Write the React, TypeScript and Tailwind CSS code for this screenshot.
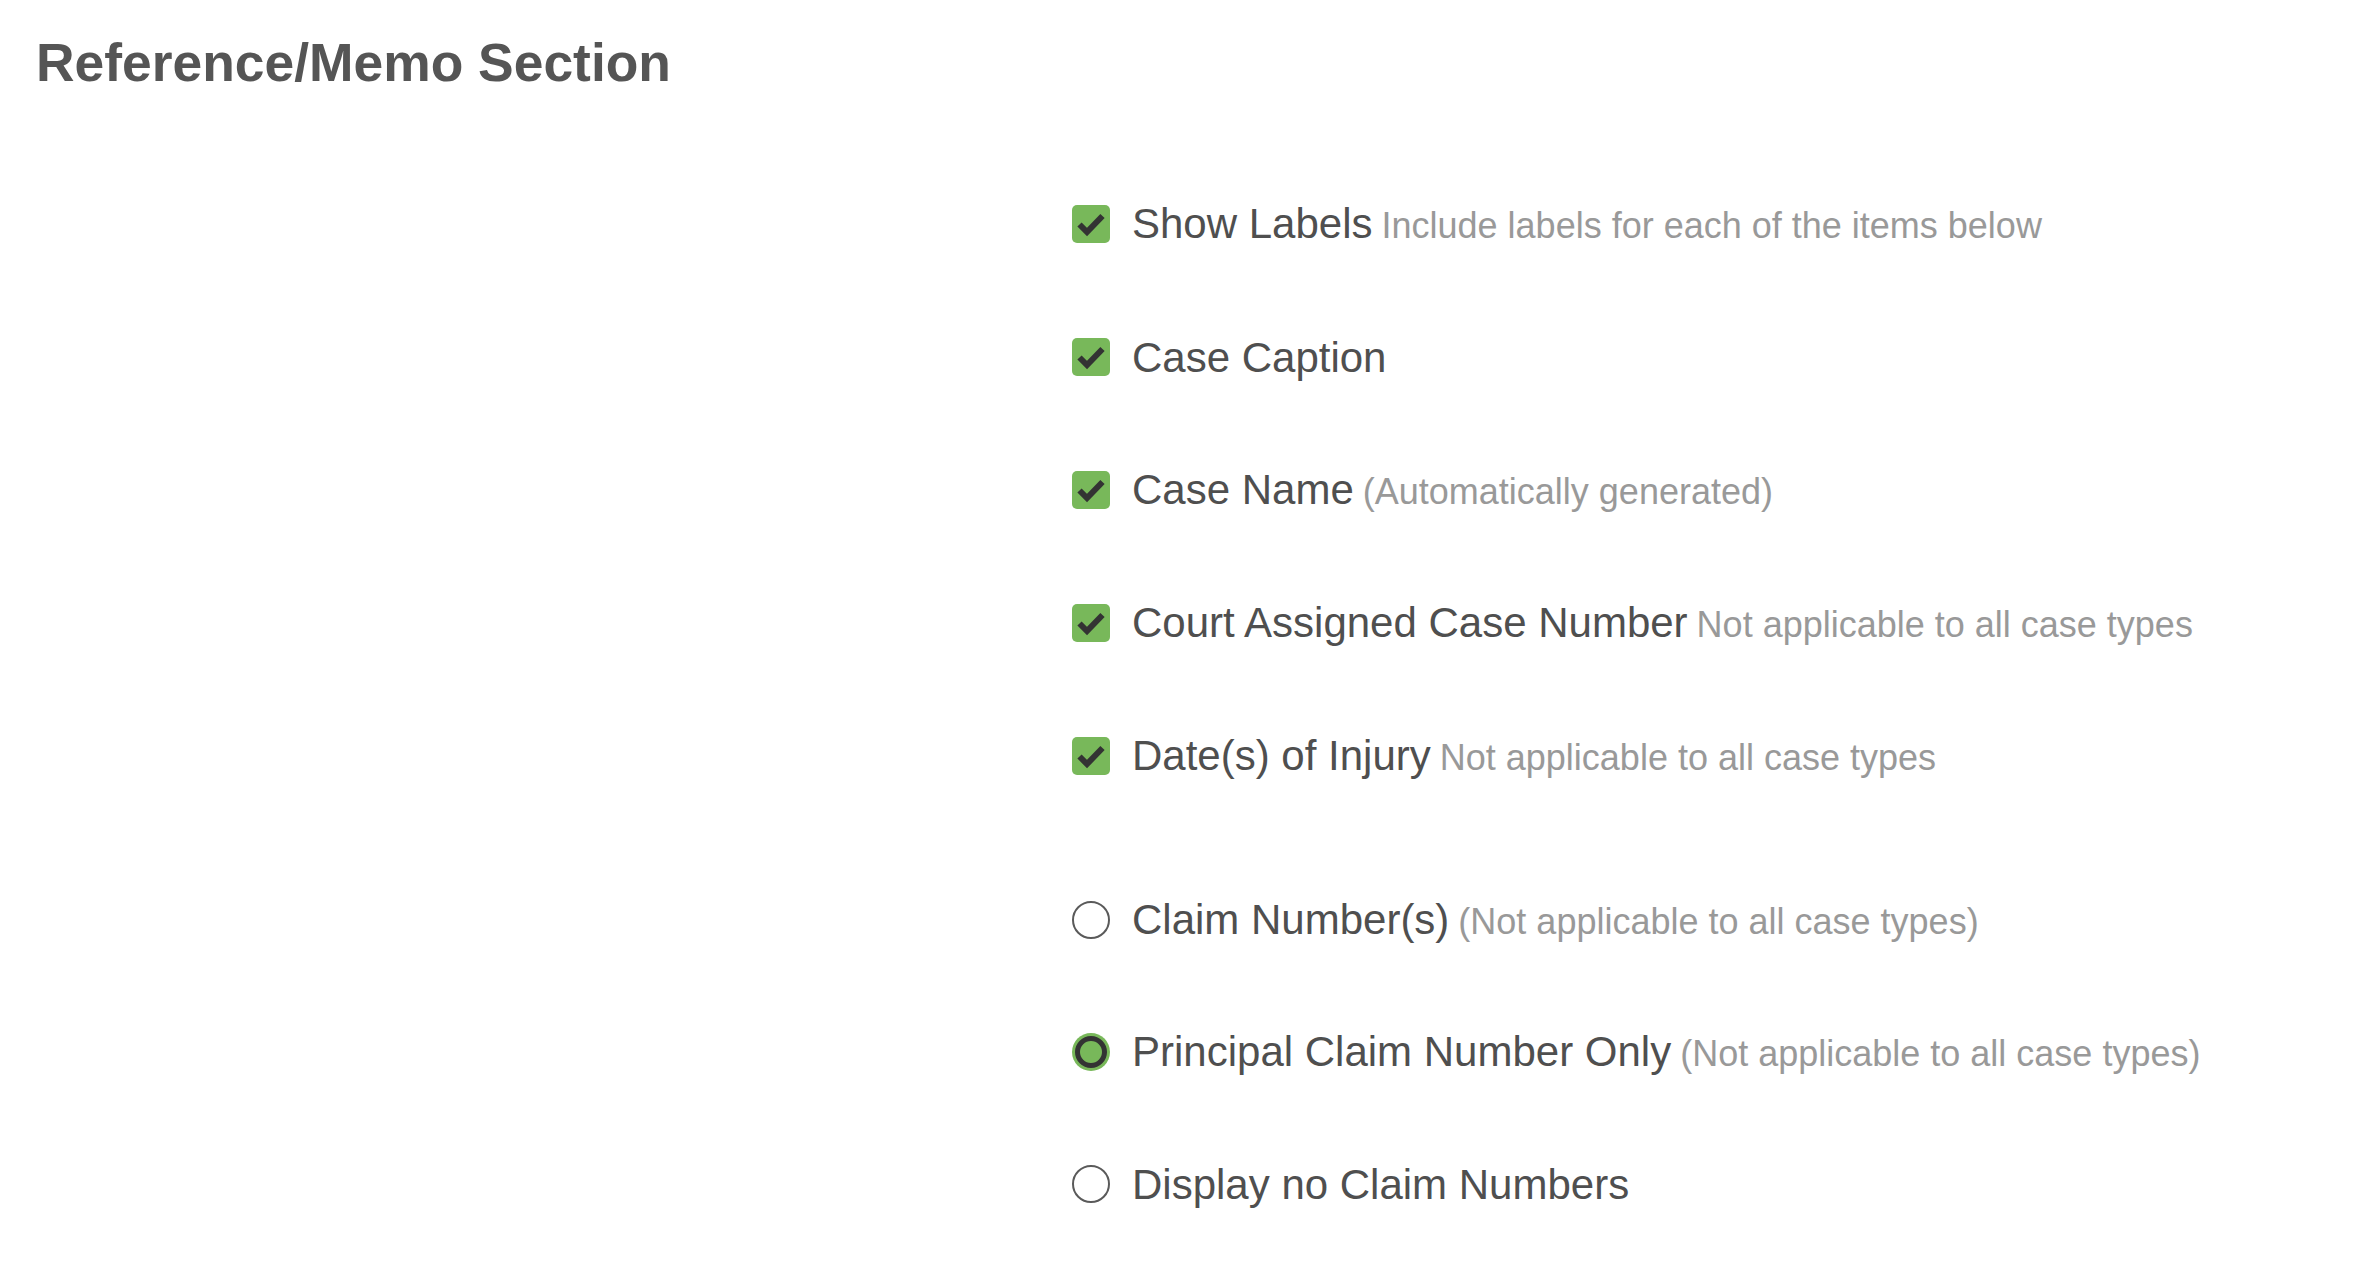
import React from "react";

type Option = {
  label: string;
  hint?: string;
};

const checkOptions: Option[] = [
  { label: "Show Labels", hint: "Include labels for each of the items below" },
  { label: "Case Caption" },
  { label: "Case Name", hint: "(Automatically generated)" },
  { label: "Court Assigned Case Number", hint: "Not applicable to all case types" },
  { label: "Date(s) of Injury", hint: "Not applicable to all case types" },
];

const claimOptions: Option[] = [
  { label: "Claim Number(s)", hint: "(Not applicable to all case types)" },
  { label: "Principal Claim Number Only", hint: "(Not applicable to all case types)" },
  { label: "Display no Claim Numbers" },
];

const CheckBox = () => (
  <span className="flex h-[38px] w-[38px] shrink-0 items-center justify-center rounded-[5px] bg-[#78b85a]">
    <svg width="30" height="30" viewBox="0 0 30 30">
      <path
        d="M3.5 15.5 L11 23 L26.5 7"
        fill="none"
        stroke="#333333"
        strokeWidth="6"
        strokeLinejoin="miter"
      />
    </svg>
  </span>
);

const Radio = ({ checked }: { checked: boolean }) =>
  checked ? (
    <span className="flex h-[38px] w-[38px] shrink-0 items-center justify-center rounded-full bg-[#78b85a]">
      <span className="h-[32px] w-[32px] rounded-full border-[5px] border-[#333333] bg-[#78b85a]" />
    </span>
  ) : (
    <span className="h-[38px] w-[38px] shrink-0 rounded-full border-2 border-[#5a5a5a] bg-white" />
  );

const Row = ({ option, control }: { option: Option; control: React.ReactNode }) => (
  <label className="flex h-[38px] items-center gap-[22px]">
    {control}
    <span className="whitespace-nowrap pt-[1px] text-[42px] leading-[38px] text-[#4f4f4f]">
      {option.label}
      {option.hint && (
        <span className="ml-[9px] text-[36px] text-[#999999]">{option.hint}</span>
      )}
    </span>
  </label>
);

export default function App() {
  const selectedClaim = 1;

  return (
    <div
      className="min-h-screen bg-white px-[36px] pt-[36px]"
      style={{ fontFamily: '"Liberation Sans", Arial, sans-serif' }}
    >
      <h2 className="text-[53.4px] font-bold leading-[53px] text-[#555555]">
        Reference/Memo Section
      </h2>

      <div className="mt-[116px] flex">
        {/* left column stays empty, options sit in the right one */}
        <div className="w-[1036px] shrink-0" />
        <div className="flex flex-col">
          <div className="flex flex-col gap-[95px]">
            {checkOptions.map((o) => (
              <Row key={o.label} option={o} control={<CheckBox />} />
            ))}
          </div>
          <div className="mt-[126px] flex flex-col gap-[94px]">
            {claimOptions.map((o, i) => (
              <Row key={o.label} option={o} control={<Radio checked={i === selectedClaim} />} />
            ))}
          </div>
        </div>
      </div>
    </div>
  );
}
